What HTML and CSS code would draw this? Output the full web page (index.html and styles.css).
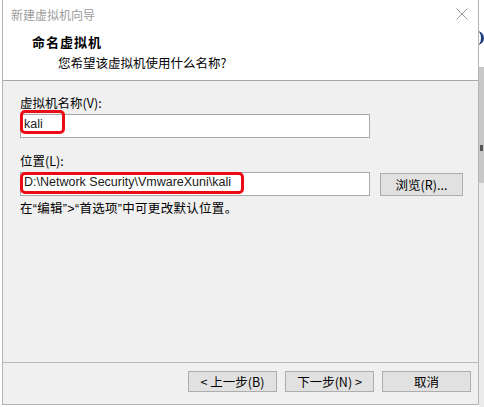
FILE: index.html
```html
<!DOCTYPE html>
<html lang="zh-CN">
<head>
    <meta charset="UTF-8">
    <title>新建虚拟机向导</title>
    <link rel="stylesheet" href="styles.css">
</head>
<body>
    <div class="screen">
        <div class="dialog">
            <div class="titlebar">
                <span class="title">新建虚拟机向导</span>
                <svg class="close" width="12" height="12" viewBox="0 0 12 12">
                    <path d="M0.5 0.5 L11.5 11.5 M11.5 0.5 L0.5 11.5" stroke="#9a9a9a" stroke-width="1" fill="none"/>
                </svg>
            </div>
            <div class="header">
                <div class="head-title">命名虚拟机</div>
                <div class="head-sub">您希望该虚拟机使用什么名称?</div>
            </div>
            <div class="content">
                <div class="label">虚拟机名称(V):</div>
                <div class="field-row">
                    <div class="input wide">
                        kali
                        <span class="mark mark-name"></span>
                    </div>
                </div>
                <div class="label second">位置(L):</div>
                <div class="field-row">
                    <div class="input wide">
                        D:\Network Security\VmwareXuni\kali
                        <span class="mark mark-path"></span>
                    </div>
                    <button class="btn browse">浏览(R)...</button>
                </div>
                <div class="hint">在“编辑”&gt;“首选项”中可更改默认位置。</div>
            </div>
            <div class="footer">
                <button class="btn">&lt; 上一步(B)</button>
                <button class="btn">下一步(N) &gt;</button>
                <button class="btn">取消</button>
            </div>
        </div>
        <div class="behind">
            <div class="behind-top"><span class="arc"></span></div>
            <div class="behind-mid"><span class="dot"></span></div>
            <div class="behind-low"></div>
        </div>
    </div>
</body>
</html>
```

FILE: styles.css
```css
body {
    margin: 0;
    background: #ffffff;
    font-family: "Noto Sans CJK SC", "Liberation Sans", sans-serif;
    font-size: 12.5px;
    color: #000;
}
.screen {
    display: flex;
    width: 484px;
    height: 407px;
    padding-left: 2px;
    box-sizing: border-box;
}
.dialog {
    width: 477px;
    height: 405px;
    border: 1px solid #b4b4b4;
    border-top: none;
    box-sizing: border-box;
    background: #f0f0f0;
    display: flex;
    flex-direction: column;
}
.titlebar {
    height: 28px;
    background: #fff;
    display: flex;
    align-items: center;
    justify-content: space-between;
    padding: 0 10px 0 8px;
}
.title {
    color: #9c9c9c;
    font-size: 12px;
}
.close {
    margin-top: -1px;
}
.header {
    height: 53px;
    background: #fff;
    border-bottom: 1px solid #a8a8a8;
    box-sizing: border-box;
    padding: 5px 0 0 29px;
}
.head-title {
    font-weight: bold;
    font-size: 13px;
    letter-spacing: 1px;
    line-height: 18px;
}
.head-sub {
    padding-left: 26px;
    margin-top: 3px;
    line-height: 18px;
}
.content {
    flex: 1;
    padding: 13px 0 0 17px;
}
.label {
    line-height: 18px;
    margin-bottom: 2px;
}
.label.second {
    margin-top: 14px;
}
.field-row {
    display: flex;
    align-items: center;
    gap: 10px;
}
.input {
    position: relative;
    height: 24px;
    box-sizing: border-box;
    border: 1px solid #a9a9a9;
    background: #fff;
    line-height: 19px;
    padding-left: 3px;
    font-family: "Liberation Sans", "Noto Sans CJK SC", sans-serif;
    font-size: 12.5px;
    color: #1a1a1a;
}
.wide {
    width: 350px;
}
.mark {
    position: absolute;
    border: 3px solid #ec0a14;
    border-radius: 5px;
}
.mark-name {
    left: -1px;
    top: -5px;
    width: 39px;
    height: 18px;
}
.mark-path {
    left: -1px;
    top: -1px;
    width: 218px;
    height: 16px;
}
.btn {
    font-family: "Noto Sans CJK SC", "Liberation Sans", sans-serif;
    font-size: 12.5px;
    height: 21px;
    width: 89px;
    padding: 0;
    background: #e1e1e1;
    border: 1px solid #adadad;
    color: #000;
}
.browse {
    width: 83px;
    height: 23px;
}
.hint {
    margin-top: 4px;
    line-height: 18px;
    font-family: "Liberation Sans", "Noto Sans CJK SC", sans-serif;
    letter-spacing: 0.3px;
}
.footer {
    height: 33px;
    border-top: 1px solid #b9b9b9;
    display: flex;
    justify-content: flex-end;
    gap: 8px;
    padding: 8px 7px 0 0;
}
.behind {
    flex: 1;
    display: flex;
    flex-direction: column;
    overflow: hidden;
}
.behind-top {
    height: 67px;
    background: #fff;
    position: relative;
}
.arc {
    position: absolute;
    left: -6px;
    top: 31px;
    width: 8px;
    height: 14px;
    border-right: 3px solid #1d3f7a;
    border-radius: 0 8px 8px 0;
}
.behind-mid {
    height: 116px;
    background: #c8c8c8;
    position: relative;
}
.dot {
    position: absolute;
    left: 1px;
    top: 78px;
    width: 3px;
    height: 6px;
    background: #555;
}
.behind-low {
    flex: 1;
    background: #ececec;
}
```
